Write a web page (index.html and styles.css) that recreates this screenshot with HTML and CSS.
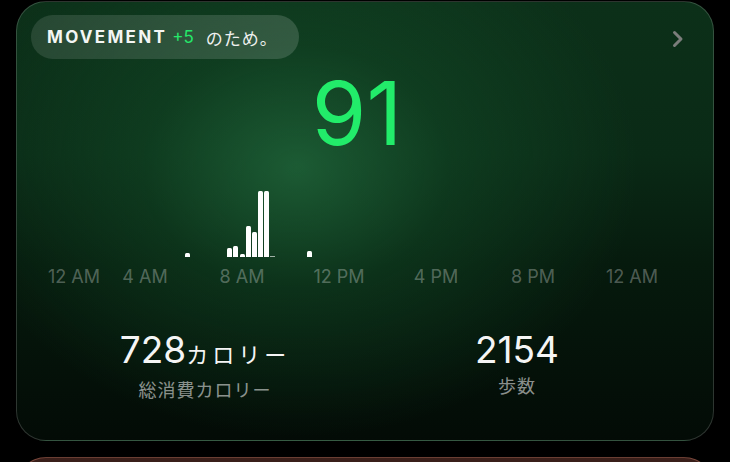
FILE: index.html
```html
<!DOCTYPE html>
<html lang="ja">
<head>
    <meta charset="UTF-8">
    <meta name="viewport" content="width=device-width, initial-scale=1.0">
    <title>Movement</title>
    <link rel="stylesheet" href="styles.css">
</head>
<body>
    <div class="page">
        <section class="card move-card">
            <div class="card-head">
                <div class="pill">
                    <span class="pill-title">MOVEMENT</span>
                    <span class="pill-plus">+5</span>
                    <span class="pill-note">のため。</span>
                </div>
                <svg class="chevron" width="12" height="18" viewBox="0 0 12 18">
                    <polyline points="2.5,2.5 9,9 2.5,15.5" fill="none" stroke="#7b7d7b" stroke-width="3" stroke-linecap="round" stroke-linejoin="round"/>
                </svg>
            </div>

            <div class="score">91</div>

            <div class="chart">
                <div class="bar" style="left:137px;height:4px"></div>
                <div class="bar" style="left:179px;height:9px"></div>
                <div class="bar" style="left:185px;height:11px"></div>
                <div class="bar" style="left:192px;height:3px"></div>
                <div class="bar" style="left:198px;height:31px"></div>
                <div class="bar" style="left:204px;height:25px"></div>
                <div class="bar" style="left:210px;height:66px"></div>
                <div class="bar" style="left:216px;height:66px"></div>
                <div class="bar bar-min" style="left:222px;height:1px"></div>
                <div class="bar" style="left:259px;height:6px"></div>
            </div>

            <div class="axis">
                <span class="tick tick-first" style="left:0">12 AM</span>
                <span class="tick" style="left:97px">4 AM</span>
                <span class="tick" style="left:194px">8 AM</span>
                <span class="tick" style="left:291px">12 PM</span>
                <span class="tick" style="left:388px">4 PM</span>
                <span class="tick" style="left:485px">8 PM</span>
                <span class="tick" style="left:584px">12 AM</span>
            </div>

            <div class="stats">
                <div class="stat">
                    <div class="stat-value">728<span class="unit">カロリー</span></div>
                    <div class="stat-label">総消費カロリー</div>
                </div>
                <div class="stat">
                    <div class="stat-value">2154</div>
                    <div class="stat-label">歩数</div>
                </div>
            </div>
        </section>

        <section class="card next-card"></section>
    </div>
</body>
</html>
```

FILE: styles.css
```css
body {
    margin: 0;
    background-color: #000;
    color: #fff;
    font-family: Inter, "Noto Sans CJK JP", sans-serif;
    overflow: hidden;
}

.page {
    box-sizing: border-box;
    height: 462px;
    overflow: hidden;
    display: flex;
    flex-direction: column;
    gap: 16px;
    padding: 1px 16px 0;
}

.card {
    box-sizing: border-box;
    width: 698px;
    border-radius: 30px;
    border: 1px solid rgba(255, 255, 255, 0.17);
    flex-shrink: 0;
}

.move-card {
    height: 440px;
    padding: 13px 14px 0;
    display: flex;
    flex-direction: column;
    background:
        radial-gradient(ellipse 340px 270px at 280px 165px, rgba(34, 108, 62, 0.75) 0%, rgba(20, 80, 42, 0.45) 45%, rgba(10, 40, 20, 0) 100%),
        linear-gradient(180deg, #0c3019 0%, #0a2a16 35%, #061a0d 60%, #030b06 100%);
}

.card-head {
    display: flex;
    justify-content: space-between;
    align-items: center;
}

.pill {
    height: 44px;
    width: 268px;
    box-sizing: border-box;
    padding: 0 16px;
    border-radius: 22px;
    background: linear-gradient(90deg, rgba(255, 255, 255, 0.11), rgba(255, 255, 255, 0.15));
    display: flex;
    align-items: center;
    font-size: 17px;
    white-space: nowrap;
}

.pill-title {
    font-weight: 700;
    letter-spacing: 2.3px;
    color: #f4f6f4;
}

.pill-plus {
    color: #25e86a;
    margin-left: 5px;
}

.pill-note {
    color: #eef0ee;
    margin-left: 12px;
    font-family: "Noto Sans CJK JP", sans-serif;
    letter-spacing: 1px;
}

.chevron {
    margin-right: 15px;
    margin-top: 3px;
}

.score {
    margin-top: 11px;
    text-align: center;
    font-size: 88px;
    line-height: 86px;
    font-weight: 400;
    color: #22ec6a;
    padding-right: 16px;
}

.chart {
    position: relative;
    margin-left: 17px;
    width: 582px;
    height: 101px;
}

.bar {
    position: absolute;
    bottom: 0;
    width: 5px;
    background: #fff;
    border-radius: 1.5px 1.5px 0 0;
}

.bar-min {
    background: rgba(255, 255, 255, 0.6);
    border-radius: 0;
}

.axis {
    position: relative;
    margin-left: 17px;
    margin-top: 9px;
    width: 582px;
    height: 22px;
    font-size: 18px;
    line-height: 22px;
    color: rgba(255, 255, 255, 0.3);
}

.tick {
    position: absolute;
    top: 0;
    transform: translateX(-50%);
    white-space: nowrap;
}

.tick-first {
    transform: none;
}

.stats {
    display: grid;
    grid-template-columns: 1fr 1fr;
    margin: 39px 26px 0 18px;
    text-align: center;
}

.stat-value {
    font-size: 37px;
    line-height: 45px;
    color: #f5f5f5;
}

.unit {
    font-family: "Noto Sans CJK JP", sans-serif;
    font-size: 22px;
    letter-spacing: 4px;
}

.stat-label {
    font-family: "Noto Sans CJK JP", sans-serif;
    font-size: 18px;
    line-height: 26px;
    letter-spacing: 1px;
    color: rgba(255, 255, 255, 0.55);
}

.next-card {
    height: 200px;
    border-color: rgba(200, 120, 100, 0.45);
    background: linear-gradient(180deg, #3a1f1a 0%, #1e0f0c 100%);
}
```
